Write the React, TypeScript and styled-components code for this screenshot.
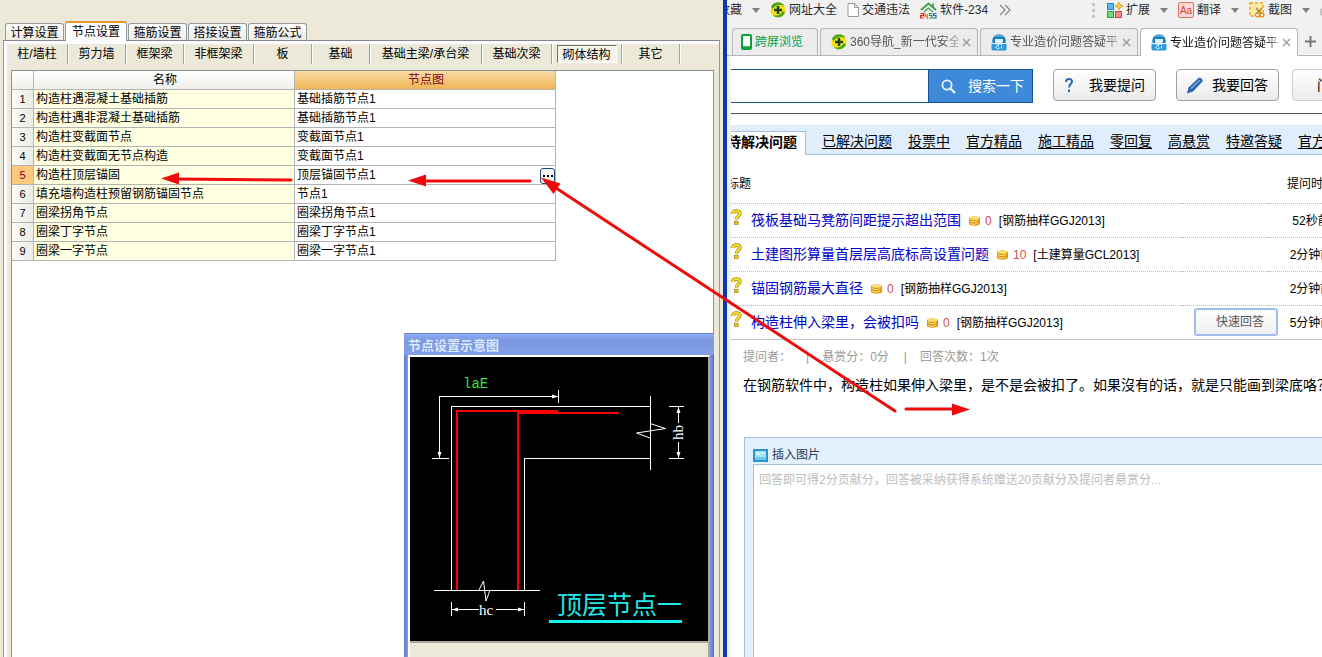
import React from 'react';
import styled, { createGlobalStyle, css } from 'styled-components';

const Global = createGlobalStyle`
  * { box-sizing: border-box; }
  html, body { margin: 0; padding: 0; overflow: hidden; }
  body, button, input, textarea, table {
    font-family: "Liberation Sans", "Noto Sans CJK SC", sans-serif;
    font-size: 12px;
    line-height: 18px;
    color: #000;
  }
  button { margin: 0; padding: 0; border: 0; background: none; white-space: nowrap; cursor: pointer; }
`;

const Desktop = styled.div`
  position: relative;
  display: grid;
  grid-template-columns: minmax(0, 727fr) minmax(0, 595fr);
  height: 100vh;
  overflow: hidden;
  background: #ece9d8;
`;

/* ---------- Rebar software window ---------- */

const Software = styled.section`
  display: flex;
  flex-direction: column;
  min-width: 0;
  padding: 21px 3px 0 3px;
  border-right: 4px solid #0a38b4;
  background: #ece9d8;
`;

const MainTabs = styled.nav`
  display: flex;
  align-items: flex-end;
  gap: 1px;
  height: 19px;
  padding-left: 2px;
`;

const MainTab = styled.button<{ $active?: boolean }>`
  height: ${p => (p.$active ? 20 : 17)}px;
  width: ${p => (p.$active ? 62 : 59)}px;
  border: 1px solid #919b9c;
  border-bottom: 0;
  border-radius: 3px 3px 0 0;
  background: linear-gradient(#fff, #ecebe6);
  ${p => p.$active && css`
    position: relative;
    align-self: flex-start;
    border-top: 2px solid #e5972d;
    background: #fcfcfe;
  `}
`;

const TabPanel = styled.div`
  display: flex;
  flex-direction: column;
  flex: 1;
  min-height: 0;
  padding: 0 2px 0 3px;
  border: 1px solid #919b9c;
  border-bottom: 0;
  border-top-color: #85858f;
  box-shadow: inset 3px 3px 0 #fcfcfe;
`;

const SubTabs = styled.div`
  display: flex;
  height: 20px;
  margin-top: 3px;
`;

const SubTab = styled.button<{ $w: number; $active?: boolean }>`
  display: flex;
  align-items: center;
  justify-content: center;
  width: ${p => p.$w}px;
  flex: none;
  line-height: 20px;
  border-right: 1px solid #a5a394;
  box-shadow: 1px 0 0 #fff;
  ${p => p.$active && css`
    span {
      width: 60px;
      height: 18px;
      line-height: 18px;
      border: 1px solid #fff;
      border-top-color: #77766c;
      border-left-color: #77766c;
      background: #f4f2ea;
    }
  `}
`;

const GridBox = styled.div`
  position: relative;
  flex: 1;
  min-height: 0;
  margin: 6px 3px 0 4px;
  border: 1px solid #85919c;
  border-bottom: 0;
  background: #fff;
`;

const NodeTable = styled.table`
  width: 544px;
  table-layout: fixed;
  border-collapse: separate;
  border-spacing: 0;
  th, td {
    height: 19px;
    padding: 1px 0 0 2px;
    border-right: 1px solid #b4b4b4;
    border-bottom: 1px solid #b4b4b4;
    line-height: 17px;
    font-weight: 400;
    text-align: left;
    white-space: nowrap;
  }
`;

const HeadCell = styled.th<{ $hot?: boolean }>`
  && {
    text-align: center;
    background: ${p => (p.$hot ? 'linear-gradient(#f8dba4, #f0b556)' : 'linear-gradient(#fff, #f0f0ec)')};
    color: ${p => (p.$hot ? '#800020' : '#000')};
  }
`;

const IndexCell = styled.th<{ $hot?: boolean }>`
  && {
    padding: 1px 0 0;
    text-align: center;
    font-size: 11px;
    background: ${p => (p.$hot ? '#fdca7d' : 'linear-gradient(90deg, #fafaf8, #ecece6)')};
    color: ${p => (p.$hot ? '#800020' : '#000')};
  }
`;

const NameCell = styled.td`
  background: #ffffe1;
`;

const NodeValue = styled.div`
  display: flex;
  align-items: center;
  justify-content: space-between;
  height: 17px;
`;

const MoreButton = styled.button`
  display: flex;
  align-items: center;
  justify-content: center;
  gap: 2px;
  width: 15px;
  height: 16px;
  border: 1px solid #1f4a78;
  border-radius: 3px;
  background: #f4f4f0;
  i { width: 2px; height: 2px; background: #000; }
`;

const Preview = styled.aside`
  position: absolute;
  top: 262px;
  right: -1px;
  bottom: 0;
  width: 310px;
  display: flex;
  flex-direction: column;
  padding: 0 4px;
  border-top: 1px solid #6a86d4;
  background: linear-gradient(90deg, #6478cf, #8095e2 3px, #7a90e0 307px, #5468bd);
`;

const PreviewTitle = styled.h2`
  margin: 0 -4px;
  padding-left: 4px;
  height: 21px;
  line-height: 23px;
  font-size: 13px;
  font-weight: 700;
  color: #dbe7fb;
  background: linear-gradient(#8fadf0, #7b98e2 30%, #829fe6);
`;

const PreviewBody = styled.div`
  flex: 1;
  border: 2px solid #fff;
  border-right-color: #aca899;
  border-bottom: 0;
  background: #ece9d8;
  svg { display: block; border-bottom: 2px solid #aca899; }
`;

/* ---------- Browser window ---------- */

const Browser = styled.section`
  display: flex;
  flex-direction: column;
  min-width: 0;
  overflow: hidden;
  background: #f1f1f1;
`;

const Bookmarks = styled.div`
  display: flex;
  flex: none;
  align-items: center;
  justify-content: space-between;
  height: 20px;
  white-space: nowrap;
`;

const BarGroup = styled.div<{ $pull?: 'left' | 'right' }>`
  display: flex;
  align-items: center;
  margin-left: ${p => (p.$pull === 'left' ? -9 : 0)}px;
  margin-right: ${p => (p.$pull === 'right' ? -12 : 0)}px;
`;

const BarItem = styled.button<{ $gap?: number }>`
  display: flex;
  align-items: center;
  gap: 3px;
  margin-right: ${p => p.$gap ?? 10}px;
  color: #2b2b2b;
  svg { flex: none; display: block; }
`;

const Caret = styled.span`
  width: 0;
  height: 0;
  margin-right: 10px;
  border: 4px solid transparent;
  border-top: 5px solid #808080;
  border-bottom: 0;
`;

const Dots = styled.span`
  width: 3px;
  height: 15px;
  margin-right: 12px;
  border-left: 3px dotted #c4c4c4;
`;

const PageTabs = styled.div`
  display: flex;
  flex: none;
  align-items: flex-end;
  gap: 2px;
  height: 36px;
  padding-left: 5px;
  border-bottom: 1px solid #b6b6b6;
`;

const PageTab = styled.div<{ $w: number; $active?: boolean; $green?: boolean }>`
  display: flex;
  flex: none;
  align-items: center;
  gap: 3px;
  width: ${p => p.$w}px;
  height: ${p => (p.$active ? 28 : 27)}px;
  margin-bottom: ${p => (p.$active ? -1 : 0)}px;
  padding: 0 6px 0 ${p => (p.$green ? 8 : 10)}px;
  border: 1px solid #b6b6b6;
  border-bottom: 0;
  border-radius: 4px 4px 0 0;
  background: ${p => (p.$active ? '#fff' : '#ececec')};
  color: ${p => (p.$green ? '#0a9f3c' : p.$active ? '#111' : '#555')};
  white-space: nowrap;
  svg { flex: none; }
`;

const TabLabel = styled.span<{ $fade?: boolean }>`
  flex: 1;
  overflow: hidden;
  ${p => p.$fade && css`mask-image: linear-gradient(90deg, #000 calc(100% - 16px), rgba(0, 0, 0, .3));`}
`;

const NewTab = styled.button`
  width: 20px;
  height: 27px;
  svg { display: block; margin: auto; }
`;

const Page = styled.main`
  flex: 1;
  min-height: 0;
  margin-left: 4px;
  overflow: hidden;
  background: #fff;
`;

const SearchRow = styled.div`
  display: flex;
  height: 58px;
  padding-top: 13px;
  border-bottom: 1px solid #555;
`;

const SearchForm = styled.form`
  display: flex;
  flex: 1;
  height: 34px;
`;

const SearchInput = styled.input`
  flex: 1;
  min-width: 0;
  border: 1px solid #1a5296;
  border-width: 1px 0;
  outline: 0;
`;

const SearchButton = styled.button`
  display: flex;
  align-items: center;
  gap: 12px;
  width: 105px;
  padding-left: 12px;
  border: 1px solid #1a5296;
  background: #3f8ad8;
  color: #fff;
  font-size: 14px;
`;

const Actions = styled.div`
  display: flex;
  gap: 20px;
  margin: 0 -73px 0 20px;
`;

const ActionButton = styled.button<{ $soft?: boolean }>`
  display: flex;
  align-items: center;
  justify-content: space-between;
  width: 103px;
  height: 32px;
  margin-left: ${p => (p.$soft ? -7 : 0)}px;
  padding: 0 10px 0 ${p => (p.$soft ? 24 : 9)}px;
  border: 1px solid ${p => (p.$soft ? '#ccc' : '#a0a0a0')};
  border-radius: 4px;
  background: linear-gradient(#fefefe, #ebebeb);
  font-size: 14px;
`;

const QuestionNav = styled.nav`
  display: flex;
  gap: 16px;
  height: 30px;
  margin-top: 11px;
  border-bottom: 1px solid #a3c1e8;
  background: #dfedfc;
  white-space: nowrap;
  font-size: 14px;
  line-height: 32px;
  a { color: #000; text-underline-offset: 2px; }
  a[aria-current] {
    height: 24px;
    margin: 6px 0 0 -5px;
    padding-right: 8px;
    line-height: 20px;
    border: 1px solid #a3c1e8;
    border-bottom: 0;
    background: #fff;
    font-weight: 700;
    text-decoration: none;
  }
`;

const Questions = styled.table`
  width: calc(100% + 32px);
  table-layout: fixed;
  border-spacing: 0;
  td, th {
    height: 34px;
    padding: 0;
    border-bottom: 1px dotted #bbb;
    font-weight: 400;
    text-align: left;
    white-space: nowrap;
  }
  tr:last-child td { border-bottom: 1px solid #c4c4c4; }
  thead th { height: 49px; padding-top: 9px; }
  thead th:first-child span { margin-left: -4px; }
  td:last-child, th:last-child { text-align: center; }
`;

const QuestionLine = styled.div`
  display: flex;
  align-items: center;
  svg { flex: none; display: block; }
  > svg { margin: 0 9px 8px 0; }
  a { margin: 0 8px 2px 0; font-size: 14px; color: #0000c8; text-decoration: none; }
`;

const Reward = styled.span`
  display: flex;
  align-items: center;
  gap: 5px;
  margin-right: 7px;
  color: #d0504c;
`;

const QuickReply = styled.button`
  display: block;
  width: 84px;
  height: 28px;
  margin: 0 0 2px 12px;
  padding-left: 8px;
  border: 2px solid #a3bdf0;
  border-radius: 3px;
  background: linear-gradient(#fff, #efefef);
  color: #555;
`;

const Meta = styled.p`
  display: flex;
  margin: 8px 0 0 12px;
  color: #999;
  white-space: nowrap;
  span + span::before { content: "|"; margin: 0 13px 0 15px; }
`;

const QuestionText = styled.p`
  margin: 9px 0 0 12px;
  font-size: 14px;
  line-height: 20px;
  white-space: nowrap;
`;

const AnswerBox = styled.div`
  display: flex;
  flex-direction: column;
  height: 100vh;
  margin: 42px 0 0 13px;
  padding: 8px 0 0 8px;
  border: 1px solid #a9bddd;
  border-right: 0;
  background: #e4f0fc;
`;

const InsertImage = styled.button`
  display: flex;
  align-items: center;
  gap: 4px;
  height: 18px;
  color: #2a4058;
`;

const AnswerText = styled.textarea`
  flex: 1;
  width: 100%;
  padding: 6px 5px;
  border: 1px solid #a9bddd;
  border-right: 0;
  border-radius: 0;
  outline: 0;
  resize: none;
  background: #fff;
  &::placeholder { color: #bdbdbd; opacity: 1; }
`;

const Annotations = styled.svg`
  position: absolute;
  top: 0;
  left: 0;
  pointer-events: none;
`;

/* ---------- Icons ---------- */

const Logo360 = () => (
  <svg width="16" height="16" viewBox="0 0 16 16">
    <circle cx="8" cy="8" r="7.6" fill="#f8e010" />
    <path d="M1 5A7.600 7.600 0 0 1 14.500 4C10 1.800 5 3.500 2.500 7z" fill="#4aa81f" />
    <path d="M15 10.500A7.600 7.600 0 0 1 2.500 13C7 14.500 11 12.500 13 9z" fill="#4aa81f" />
    <path d="M8 4v8M4 8h8" stroke="#17471a" strokeWidth="2.400" />
  </svg>
);

const PageIcon = () => (
  <svg width="12" height="14" viewBox="0 0 12 14" fill="#fff" stroke="#9a9a9a">
    <path d="M1 .5h6.500l4 4v9H1zM7.500.5v4h4" />
  </svg>
);

const HouseIcon = () => (
  <svg width="17" height="17" viewBox="0 0 17 17" fill="none">
    <path d="M1 8l7.500-6.500L16 8M13 1.500V5" stroke="#3aa04a" strokeWidth="1.800" />
    <path d="M4 10l4.500-4 4.500 4" stroke="#3aa04a" strokeWidth="1.200" />
    <path d="M.5 11.500h3v2.200h-3v2.300h3.200" stroke="#d22" strokeWidth="1.200" />
    <path d="M5 11v3.200h3M7.200 12v5" stroke="#e07820" strokeWidth="1.200" />
    <path d="M12 11.500H9.500v2H12v2.500H9" stroke="#2a9a3c" strokeWidth="1.200" />
    <path d="M16.500 11.500h-3v2H16v2.500h-3" stroke="#2a62c8" strokeWidth="1.200" />
  </svg>
);

const ChevronsIcon = () => (
  <svg width="12" height="12" viewBox="0 0 12 12" fill="none" stroke="#888" strokeWidth="1.300">
    <path d="M1 1l5 5-5 5M6 1l5 5-5 5" />
  </svg>
);

const ExtensionsIcon = () => (
  <svg width="16" height="16" viewBox="0 0 16 16">
    <rect x=".5" y="1.500" width="6" height="6" fill="#5db8ee" stroke="#2b83c4" />
    <rect x=".5" y="9.500" width="6" height="6" fill="#6fdc7a" stroke="#2a9c3c" />
    <rect x="8.500" y="9.500" width="6" height="6" fill="#f58a80" stroke="#cf4a44" />
    <path d="M12 0l1.300 2.700L16 4l-2.700 1.300L12 8l-1.300-2.700L8 4l2.700-1.300z" fill="#fcd437" stroke="#d08b12" strokeWidth=".7" />
  </svg>
);

const TranslateIcon = () => (
  <svg width="16" height="16" viewBox="0 0 16 16">
    <rect x=".5" y=".5" width="15" height="15" rx="1.500" fill="#fdd9d6" stroke="#e2716c" />
    <text x="8" y="12" textAnchor="middle" fontSize="10" fill="#d8423c">Aa</text>
  </svg>
);

const CaptureIcon = () => (
  <svg width="16" height="16" viewBox="0 0 16 16">
    <rect x="1" y="1" width="13" height="13" fill="#fbe9a8" stroke="#e3a62a" strokeWidth="1.500" strokeDasharray="3 2" />
    <path d="M7 6l6 6M13 6l-6 6" stroke="#a87a2c" strokeWidth="1.300" />
    <circle cx="8.500" cy="13" r="1.900" fill="#fff" stroke="#e58a1f" strokeWidth="1.400" />
    <circle cx="13" cy="13" r="1.900" fill="#fff" stroke="#e58a1f" strokeWidth="1.400" />
  </svg>
);

const PhoneIcon = () => (
  <svg width="11" height="16" viewBox="0 0 11 16">
    <rect x="1" y="1" width="9" height="14" rx="1" fill="#fff" stroke="#0a9f3c" strokeWidth="2" />
    <path d="M1 13.500h9" stroke="#0a9f3c" strokeWidth="2.500" />
  </svg>
);

const GuruIcon = () => (
  <svg width="16" height="17" viewBox="0 0 16 17">
    <path d="M1.500 9C.5 3 4 .5 8 .5S15.500 3 14.500 9z" fill="#1b7cc4" />
    <path d="M4 5h8v3.500c-2.500 1-5.500 1-8 0z" fill="#d6effb" />
    <path d="M.5 9.500c4 1.500 11 1.500 15 0V15c0 1-1 1.500-2 1.500h-11c-1 0-2-.5-2-1.500z" fill="#2c9ade" />
    <path d="M4 2.700c2-1.200 6-1.200 8 0" stroke="#7fcaf0" fill="none" />
    <path d="M8 12a2 1.500 0 1 0 0 2.500v-1.200M10.500 12v2.500" stroke="#e6f6ff" fill="none" />
  </svg>
);

const CloseIcon = () => (
  <svg width="9" height="9" viewBox="0 0 9 9" stroke="#999" strokeWidth="1.300">
    <path d="M1 1l7 7M8 1L1 8" />
  </svg>
);

const SearchIcon = () => (
  <svg width="15" height="15" viewBox="0 0 15 15" fill="none" stroke="#e8f2fc">
    <circle cx="6" cy="6" r="4.600" strokeWidth="1.800" />
    <path d="M9.300 9.300L14 14" strokeWidth="2.400" />
  </svg>
);

const AskIcon = () => (
  <svg width="12" height="16" viewBox="0 0 12 16" fill="none" stroke="#2a68b4" strokeWidth="2">
    <path d="M3 5C3 1 9 1 9 4.500 9 7 6 7.200 6 10.500M6 12.500v2.500" />
  </svg>
);

const PenIcon = () => (
  <svg width="18" height="17" viewBox="0 0 18 17">
    <path d="M1 16.500l1.500-6L12.500 1c1.500-1 5 1.500 4 3.500L7 14.500z" fill="#2b66ae" />
    <path d="M5 11.500L14 3" stroke="#7db0e6" strokeWidth="1.200" />
  </svg>
);

const QuestionIcon = () => (
  <svg width="11" height="16" viewBox="0 0 11 16">
    <path d="M1.800 5C1.800 1 9 1 9 4.500 9 7 5.500 7 5.500 10.500" fill="none" stroke="#a3820f" strokeWidth="3.400" />
    <path d="M1.800 5C1.800 1 9 1 9 4.500 9 7 5.500 7 5.500 10" fill="none" stroke="#f9e32a" strokeWidth="2" />
    <rect x="3.500" y="12.300" width="3.600" height="3" fill="#f0d020" stroke="#a3820f" strokeWidth=".8" />
  </svg>
);

const CoinsIcon = () => (
  <svg width="11" height="10" viewBox="0 0 11 10">
    <path d="M0 2C1 0 10 0 11 2v6c-1 2.300-10 2.300-11 0z" fill="#dd9a14" />
    <ellipse cx="5.500" cy="2.200" rx="4.800" ry="1.500" fill="#fbe272" />
    <path d="M1 4.700c2 1.200 6 1.200 8 0M1 7.200c2 1.200 6 1.200 8 0" fill="none" stroke="#fbe27a" />
  </svg>
);

const PictureIcon = () => (
  <svg width="15" height="13" viewBox="0 0 15 13">
    <rect x="1" y="1" width="13" height="11" fill="#a8e2f8" stroke="#2794cf" strokeWidth="2" />
    <path d="M2 9.500l3-2 3 1 2-1 3 2V11H2z" fill="#6cc8ee" />
    <circle cx="5" cy="4.500" r="1.300" fill="#fff" />
    <path d="M8 4h3" stroke="#fff" />
  </svg>
);

/* Column-top anchorage detail: concrete outline, bent bars and dimension lines */
const NodeDrawing = () => (
  <svg width="298" height="286" viewBox="410 357 298 284" preserveAspectRatio="none">
    <rect x="410" y="357" width="298" height="284" fill="#000" />
    <g fill="none" stroke="#fff" shapeRendering="crispEdges">
      <path d="M451.500 590V406.500H650M524.500 590V458.500H650M650.500 396v74M434 590.500h106" />
      <path d="M439.500 458V396.500H558M558.500 390v13M432 458.500h17" />
      <path d="M669 406.500h15M669 458.500h15M678.500 407v16M678.500 442v16" />
      <path d="M451.500 602v14M524.500 602v14M452 609.500h27M496 609.500h28" />
    </g>
    <g fill="none" stroke="#fff">
      <path d="M650 423.500l15.500 5-29 4.500 13.500 5" />
      <path d="M479 590l4.500-9 2.500 20 4-11" />
    </g>
    <g fill="#fff">
      <path d="M558 396.500l-6-2v4zM439.500 458l-2-6h4zM678.500 407l-2 6h4zM678.500 458l-2-6h4z" />
      <path d="M452 609.500l6-2v4zM524 609.500l-6-2v4z" />
    </g>
    <g fill="none" stroke="#f00" strokeWidth="2">
      <path d="M457 590V411h101M518 590V413h101" />
      <path d="M518 411.500h40" strokeWidth="3" />
    </g>
    <text x="463" y="388" fontSize="14" fill="#3ce03c" fontFamily='"Liberation Mono", monospace'>laE</text>
    <text x="479" y="615" fontSize="15" fill="#fff" fontFamily='"Liberation Serif", serif'>hc</text>
    <text transform="translate(683 440) rotate(-90)" fontSize="15" fill="#fff" fontFamily='"Liberation Serif", serif'>hb</text>
    <text x="557" y="614" fontSize="25" fill="#20e8e8" fontFamily='"Noto Sans CJK SC", sans-serif'>顶层节点一</text>
    <path d="M549 621.500h133" stroke="#18f0f0" strokeWidth="3" />
  </svg>
);

/* ---------- Data ---------- */

const mainTabs = ['计算设置', '节点设置', '箍筋设置', '搭接设置', '箍筋公式'];

const subTabs: [string, number][] = [
  ['柱/墙柱', 61], ['剪力墙', 58], ['框架梁', 58], ['非框架梁', 70], ['板', 58], ['基础', 58],
  ['基础主梁/承台梁', 112], ['基础次梁', 70], ['砌体结构', 70], ['其它', 58],
];

const nodes = [
  ['构造柱遇混凝土基础插筋', '基础插筋节点1'],
  ['构造柱遇非混凝土基础插筋', '基础插筋节点1'],
  ['构造柱变截面节点', '变截面节点1'],
  ['构造柱变截面无节点构造', '变截面节点1'],
  ['构造柱顶层锚固', '顶层锚固节点1'],
  ['填充墙构造柱预留钢筋锚固节点', '节点1'],
  ['圈梁拐角节点', '圈梁拐角节点1'],
  ['圈梁丁字节点', '圈梁丁字节点1'],
  ['圈梁一字节点', '圈梁一字节点1'],
];

const navLinks = ['已解决问题', '投票中', '官方精品', '施工精品', '零回复', '高悬赏', '特邀答疑', '官方答疑'];

const questions = [
  { title: '筏板基础马凳筋间距提示超出范围', reward: 0, tag: '[钢筋抽样GGJ2013]', time: '52秒前' },
  { title: '土建图形算量首层层高底标高设置问题', reward: 10, tag: '[土建算量GCL2013]', time: '2分钟前' },
  { title: '锚固钢筋最大直径', reward: 0, tag: '[钢筋抽样GGJ2013]', time: '2分钟前' },
  { title: '构造柱伸入梁里，会被扣吗', reward: 0, tag: '[钢筋抽样GGJ2013]', time: '5分钟前', quick: true },
];

export default function App() {
  return (
    <Desktop>
      <Global />
      <Software>
        <MainTabs>
          {mainTabs.map(t => <MainTab key={t} $active={t === '节点设置'}>{t}</MainTab>)}
        </MainTabs>
        <TabPanel>
          <SubTabs>
            {subTabs.map(([t, w]) => (
              <SubTab key={t} $w={w} $active={t === '砌体结构'}><span>{t}</span></SubTab>
            ))}
          </SubTabs>
          <GridBox>
            <NodeTable>
              <colgroup><col width="22" /><col width="261" /><col width="261" /></colgroup>
              <thead>
                <tr><HeadCell /><HeadCell>名称</HeadCell><HeadCell $hot>节点图</HeadCell></tr>
              </thead>
              <tbody>
                {nodes.map(([name, value], i) => (
                  <tr key={name}>
                    <IndexCell $hot={i === 4}>{i + 1}</IndexCell>
                    <NameCell>{name}</NameCell>
                    <td>
                      <NodeValue>
                        {value}
                        {i === 4 && <MoreButton aria-label="选择节点"><i /><i /><i /></MoreButton>}
                      </NodeValue>
                    </td>
                  </tr>
                ))}
              </tbody>
            </NodeTable>
            <Preview>
              <PreviewTitle>节点设置示意图</PreviewTitle>
              <PreviewBody><NodeDrawing /></PreviewBody>
            </Preview>
          </GridBox>
        </TabPanel>
      </Software>

      <Browser>
        <Bookmarks>
          <BarGroup $pull="left">
            <BarItem>收藏</BarItem>
            <Caret />
            <BarItem><Logo360 />网址大全</BarItem>
            <BarItem><PageIcon />交通违法</BarItem>
            <BarItem $gap={11}><HouseIcon />软件-234</BarItem>
            <ChevronsIcon />
          </BarGroup>
          <BarGroup $pull="right">
            <Dots />
            <BarItem><ExtensionsIcon />扩展</BarItem>
            <Caret />
            <BarItem><TranslateIcon />翻译</BarItem>
            <Caret />
            <BarItem><CaptureIcon />截图</BarItem>
            <Caret />
            <svg width="14" height="14" viewBox="0 0 14 14" fill="#fff" stroke="#999"><path d="M1 6h12v6H1zM3.500 6V1.500h7V6" /></svg>
          </BarGroup>
        </Bookmarks>
        <PageTabs>
          <PageTab $w={86} $green><PhoneIcon /><TabLabel>跨屏浏览</TabLabel></PageTab>
          <PageTab $w={158}><Logo360 /><TabLabel $fade>360导航_新一代安全上网</TabLabel><CloseIcon /></PageTab>
          <PageTab $w={158}><GuruIcon /><TabLabel $fade>专业造价问题答疑平台</TabLabel><CloseIcon /></PageTab>
          <PageTab $w={158} $active><GuruIcon /><TabLabel $fade>专业造价问题答疑平台</TabLabel><CloseIcon /></PageTab>
          <NewTab aria-label="新标签">
            <svg width="11" height="11" viewBox="0 0 11 11" stroke="#777" strokeWidth="2"><path d="M5.500 0v11M0 5.500h11" /></svg>
          </NewTab>
        </PageTabs>
        <Page>
          <SearchRow>
            <SearchForm>
              <SearchInput aria-label="搜索" />
              <SearchButton type="button"><SearchIcon />搜索一下</SearchButton>
            </SearchForm>
            <Actions>
              <ActionButton><AskIcon />我要提问</ActionButton>
              <ActionButton><PenIcon />我要回答</ActionButton>
              <ActionButton $soft>门户首页</ActionButton>
            </Actions>
          </SearchRow>
          <QuestionNav>
            <a href="#pending" aria-current="page">待解决问题</a>
            {navLinks.map(t => <a key={t} href="#list">{t}</a>)}
          </QuestionNav>
          <Questions>
            <colgroup><col /><col width="86" /><col width="86" /></colgroup>
            <thead>
              <tr><th><span>标题</span></th><th /><th>提问时间</th></tr>
            </thead>
            <tbody>
              {questions.map(q => (
                <tr key={q.title}>
                  <td>
                    <QuestionLine>
                      <QuestionIcon />
                      <a href="#question">{q.title}</a>
                      <Reward><CoinsIcon />{q.reward}</Reward>
                      <span>{q.tag}</span>
                    </QuestionLine>
                  </td>
                  <td>{q.quick && <QuickReply>快速回答</QuickReply>}</td>
                  <td>{q.time}</td>
                </tr>
              ))}
            </tbody>
          </Questions>
          <Meta><span>提问者：</span><span>悬赏分：0分</span><span>回答次数：1次</span></Meta>
          <QuestionText>在钢筋软件中，构造柱如果伸入梁里，是不是会被扣了。如果沒有的话，就是只能画到梁底咯？</QuestionText>
          <AnswerBox>
            <InsertImage><PictureIcon />插入图片</InsertImage>
            <AnswerText aria-label="回答" placeholder="回答即可得2分贡献分，回答被采纳获得系统赠送20贡献分及提问者悬赏分..." />
          </AnswerBox>
        </Page>
      </Browser>

      <Annotations width="1322" height="657" viewBox="0 0 1322 657" aria-hidden="true">
        <g stroke="#ef0b0b" strokeWidth="3" strokeLinecap="round">
          <path d="M291 180L176 179M530 181H424M895 411L556 188M906 409h48" />
        </g>
        <g fill="#ef0b0b">
          <path d="M161 178.500l18-6v12zM408 180.500l18-6v12zM541 177.500l19.500 6-7 10.500zM970 409.500l-18-6v12z" />
        </g>
      </Annotations>
    </Desktop>
  );
}
